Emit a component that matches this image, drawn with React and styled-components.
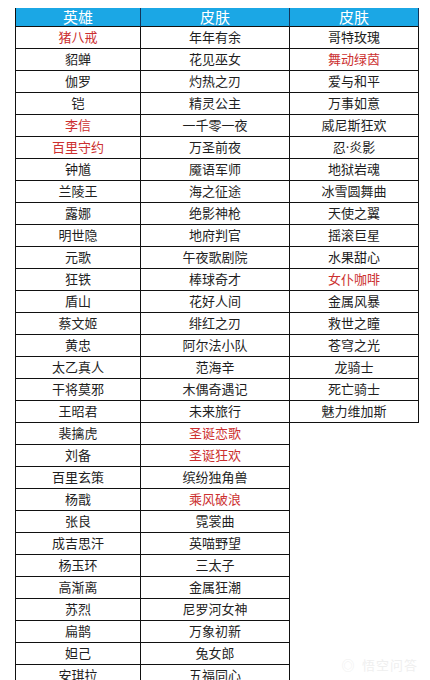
import React from "react";
import styled, { createGlobalStyle } from "styled-components";

const heroes = [
	["猪八戒", true, "年年有余", false, "哥特玫瑰", false],
	["貂蝉", false, "花见巫女", false, "舞动绿茵", true],
	["伽罗", false, "灼热之刃", false, "爱与和平", false],
	["铠", false, "精灵公主", false, "万事如意", false],
	["李信", true, "一千零一夜", false, "威尼斯狂欢", false],
	["百里守约", true, "万圣前夜", false, "忍·炎影", false],
	["钟馗", false, "魇语军师", false, "地狱岩魂", false],
	["兰陵王", false, "海之征途", false, "冰雪圆舞曲", false],
	["露娜", false, "绝影神枪", false, "天使之翼", false],
	["明世隐", false, "地府判官", false, "摇滚巨星", false],
	["元歌", false, "午夜歌剧院", false, "水果甜心", false],
	["狂铁", false, "棒球奇才", false, "女仆咖啡", true],
	["盾山", false, "花好人间", false, "金属风暴", false],
	["蔡文姬", false, "绯红之刃", false, "救世之瞳", false],
	["黄忠", false, "阿尔法小队", false, "苍穹之光", false],
	["太乙真人", false, "范海辛", false, "龙骑士", false],
	["干将莫邪", false, "木偶奇遇记", false, "死亡骑士", false],
	["王昭君", false, "未来旅行", false, "魅力维加斯", false],
	["裴擒虎", false, "圣诞恋歌", true],
	["刘备", false, "圣诞狂欢", true],
	["百里玄策", false, "缤纷独角兽", false],
	["杨戬", false, "乘风破浪", true],
	["张良", false, "霓裳曲", false],
	["成吉思汗", false, "英喵野望", false],
	["杨玉环", false, "三太子", false],
	["高渐离", false, "金属狂潮", false],
	["苏烈", false, "尼罗河女神", false],
	["扁鹊", false, "万象初新", false],
	["妲己", false, "兔女郎", false],
	["安琪拉", false, "五福同心", false],
];

const App = () => {
	return (
		<Page>
			<GlobalStyle />
			<Sheet>
				<HeadCell>英雄</HeadCell>
				<HeadCell>皮肤</HeadCell>
				<HeadCell>皮肤</HeadCell>
				{heroes.map(([hero, heroRed, skin, skinRed, extra, extraRed]) => (
					<React.Fragment key={hero}>
						<Cell $red={heroRed}>{hero}</Cell>
						<Cell $red={skinRed}>{skin}</Cell>
						{extra ? <Cell $red={extraRed}>{extra}</Cell> : <Blank />}
					</React.Fragment>
				))}
			</Sheet>
			<Watermark>
				<b>◎</b> 悟空问答
			</Watermark>
		</Page>
	);
};

export default App;

const GlobalStyle = createGlobalStyle`
	html, body {
		margin: 0;
		padding: 0;
		background: #ffffff;
		overflow: hidden;
	}
	body {
		font-family: "Noto Sans", "Noto Sans CJK SC", sans-serif;
	}
`;

const Page = styled.div`
	position: relative;
	width: 430px;
	height: 680px;
	overflow: hidden;
	padding: 8px 0 0 15px;
	box-sizing: border-box;
`;

const Sheet = styled.div`
	display: grid;
	grid-template-columns: 125px 149px 129px;
	grid-auto-rows: 22px;
	grid-template-rows: 19px;
	width: 404px;
	border-left: 1px solid #111;
`;

const HeadCell = styled.div`
	display: flex;
	align-items: center;
	justify-content: center;
	box-sizing: border-box;
	background: #1ba7e5;
	color: #ffffff;
	font-size: 15px;
	line-height: 1;
	border-right: 1px solid #13355a;
	border-bottom: 1px solid #111;
`;

const Cell = styled.div`
	display: flex;
	align-items: center;
	justify-content: center;
	box-sizing: border-box;
	color: ${({ $red }) => ($red ? "#cc3030" : "#1e1e1e")};
	font-size: 13px;
	line-height: 1;
	border-right: 1px solid #111;
	border-bottom: 1px solid #111;
`;

const Blank = styled.div`
	background: transparent;
`;

const Watermark = styled.div`
	position: absolute;
	right: 12px;
	bottom: 6px;
	color: #efefef;
	font-size: 13px;
	letter-spacing: 1px;
	b {
		font-weight: normal;
		margin-right: 2px;
	}
`;
